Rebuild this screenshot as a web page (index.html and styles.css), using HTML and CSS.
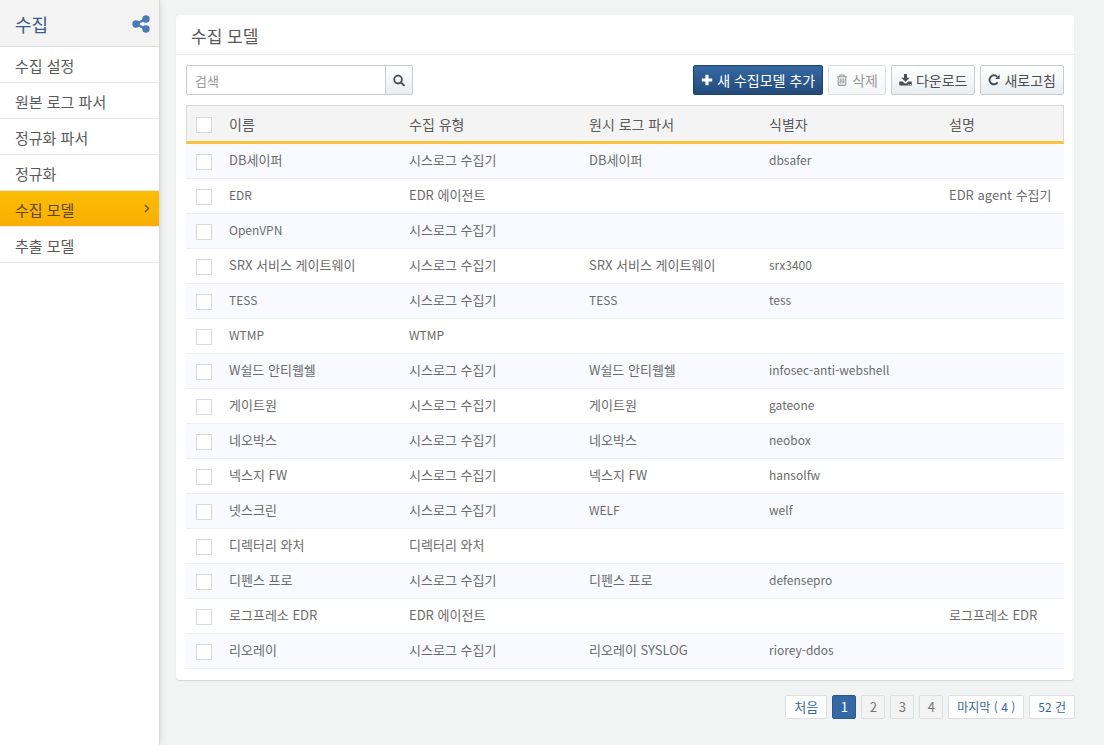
FILE: index.html
```html
<!DOCTYPE html>
<html lang="ko">
<head>
<meta charset="utf-8">
<meta name="viewport" content="width=device-width, initial-scale=1">
<title>수집 모델</title>
<link rel="stylesheet" href="styles.css">
</head>
<body>
<div class="app">
  <aside class="sidebar">
    <header class="sidebar-head">
      <h1 class="sidebar-title">수집</h1>
      <svg class="share-icon" width="18" height="18" viewBox="0 0 18 18" aria-hidden="true">
        <path d="M14 4 4 9l10 5" fill="none" stroke="currentColor" stroke-width="2.4"/>
        <circle cx="14" cy="4" r="3.7"/><circle cx="4" cy="9" r="3.7"/><circle cx="14" cy="14" r="3.7"/>
      </svg>
    </header>
    <nav class="menu">
      <a class="menu-item" href="#">수집 설정</a>
      <a class="menu-item" href="#">원본 로그 파서</a>
      <a class="menu-item" href="#">정규화 파서</a>
      <a class="menu-item" href="#">정규화</a>
      <a class="menu-item active" href="#" aria-current="page">수집 모델
        <svg class="chevron" width="6" height="9" viewBox="0 0 6 9" aria-hidden="true"><path d="M1 1l3.500 3.500L1 8" fill="none" stroke="currentColor" stroke-width="1.3"/></svg>
      </a>
      <a class="menu-item" href="#">추출 모델</a>
    </nav>
  </aside>
  <main class="content">
    <section class="panel">
      <h2 class="panel-title">수집 모델</h2>
      <div class="panel-body">
        <div class="toolbar">
          <form class="search">
            <input class="search-input" type="text" placeholder="검색" aria-label="검색">
            <button class="btn search-btn" type="button" aria-label="검색 실행">
              <svg width="13" height="13" viewBox="0 0 13 13" aria-hidden="true"><circle cx="5.5" cy="5.5" r="4.2" fill="none" stroke="currentColor" stroke-width="2"/><path d="M8.500 8.500l3.300 3.300" stroke="currentColor" stroke-width="2.2" stroke-linecap="round"/></svg>
            </button>
          </form>
          <div class="actions">
            <button class="btn primary" type="button">
              <svg width="12" height="12" viewBox="0 0 12 12" aria-hidden="true"><path d="M4.400.8h3.200v3.600h3.600v3.200H7.600v3.600H4.400V7.600H.8V4.400h3.600z" fill="currentColor"/></svg>새 수집모델 추가</button>
            <button class="btn" type="button" disabled>
              <svg width="12" height="12" viewBox="0 0 12 12" aria-hidden="true"><path d="M1 2.800h10M4 2.500V1h4v1.500M2.200 3v7.300q0 1.100 1.100 1.100h5.400q1.100 0 1.100-1.100V3M4.200 4.500v5M6 4.500v5M7.800 4.500v5" fill="none" stroke="currentColor" stroke-width="1.1"/></svg>삭제</button>
            <button class="btn" type="button">
              <svg width="13" height="12" viewBox="0 0 13 12" aria-hidden="true"><path d="M5 0h3v3.700h2.700L6.500 7.800 2.300 3.700H5zM1 7.500h2.700l1.600 1.600q1.200 1 2.400 0l1.600-1.600H12q.8 0 .8.8v2.500q0 .8-.8.8H1q-.8 0-.8-.8V8.300q0-.8.8-.8zm8.400 2.400v1h.9v-1zm1.700 0v1h.9v-1z" fill="currentColor" fill-rule="evenodd"/></svg>다운로드</button>
            <button class="btn" type="button">
              <svg width="12" height="12" viewBox="0 0 12 12" aria-hidden="true"><path d="M9.700 8.400A4.500 4.500 0 1 1 9.200 2.700" fill="none" stroke="currentColor" stroke-width="2"/><path d="M11.700.6v4.500H7.200z" fill="currentColor"/></svg>새로고침</button>
          </div>
        </div>
        <table class="grid">
          <colgroup><col class="col-check"><col class="col-field"><col class="col-field"><col class="col-field"><col class="col-field"><col></colgroup>
          <thead>
            <tr><th><input class="check" type="checkbox" aria-label="전체 선택"></th><th scope="col">이름</th><th scope="col">수집 유형</th><th scope="col">원시 로그 파서</th><th scope="col">식별자</th><th scope="col">설명</th></tr>
          </thead>
          <tbody>
            <tr><td><input class="check" type="checkbox" aria-label="DB세이퍼"></td><td>DB세이퍼</td><td>시스로그 수집기</td><td>DB세이퍼</td><td class="latin">dbsafer</td><td></td></tr>
            <tr><td><input class="check" type="checkbox" aria-label="EDR"></td><td class="latin">EDR</td><td>EDR 에이전트</td><td></td><td></td><td>EDR agent 수집기</td></tr>
            <tr><td><input class="check" type="checkbox" aria-label="OpenVPN"></td><td class="latin">OpenVPN</td><td>시스로그 수집기</td><td></td><td></td><td></td></tr>
            <tr><td><input class="check" type="checkbox" aria-label="SRX 서비스 게이트웨이"></td><td>SRX 서비스 게이트웨이</td><td>시스로그 수집기</td><td>SRX 서비스 게이트웨이</td><td class="latin">srx3400</td><td></td></tr>
            <tr><td><input class="check" type="checkbox" aria-label="TESS"></td><td class="latin">TESS</td><td>시스로그 수집기</td><td class="latin">TESS</td><td class="latin">tess</td><td></td></tr>
            <tr><td><input class="check" type="checkbox" aria-label="WTMP"></td><td class="latin">WTMP</td><td class="latin">WTMP</td><td></td><td></td><td></td></tr>
            <tr><td><input class="check" type="checkbox" aria-label="W쉴드 안티웹쉘"></td><td>W쉴드 안티웹쉘</td><td>시스로그 수집기</td><td>W쉴드 안티웹쉘</td><td class="latin">infosec-anti-webshell</td><td></td></tr>
            <tr><td><input class="check" type="checkbox" aria-label="게이트원"></td><td>게이트원</td><td>시스로그 수집기</td><td>게이트원</td><td class="latin">gateone</td><td></td></tr>
            <tr><td><input class="check" type="checkbox" aria-label="네오박스"></td><td>네오박스</td><td>시스로그 수집기</td><td>네오박스</td><td class="latin">neobox</td><td></td></tr>
            <tr><td><input class="check" type="checkbox" aria-label="넥스지 FW"></td><td>넥스지 FW</td><td>시스로그 수집기</td><td>넥스지 FW</td><td class="latin">hansolfw</td><td></td></tr>
            <tr><td><input class="check" type="checkbox" aria-label="넷스크린"></td><td>넷스크린</td><td>시스로그 수집기</td><td class="latin">WELF</td><td class="latin">welf</td><td></td></tr>
            <tr><td><input class="check" type="checkbox" aria-label="디렉터리 와처"></td><td>디렉터리 와처</td><td>디렉터리 와처</td><td></td><td></td><td></td></tr>
            <tr><td><input class="check" type="checkbox" aria-label="디펜스 프로"></td><td>디펜스 프로</td><td>시스로그 수집기</td><td>디펜스 프로</td><td class="latin">defensepro</td><td></td></tr>
            <tr><td><input class="check" type="checkbox" aria-label="로그프레소 EDR"></td><td>로그프레소 EDR</td><td>EDR 에이전트</td><td></td><td></td><td>로그프레소 EDR</td></tr>
            <tr><td><input class="check" type="checkbox" aria-label="리오레이"></td><td>리오레이</td><td>시스로그 수집기</td><td>리오레이 SYSLOG</td><td class="latin">riorey-ddos</td><td></td></tr>
          </tbody>
        </table>
      </div>
    </section>
    <nav class="pager" aria-label="페이지">
      <a class="page" href="#">처음</a>
      <a class="page number current" href="#" aria-current="page">1</a>
      <a class="page number" href="#">2</a>
      <a class="page number" href="#">3</a>
      <a class="page number" href="#">4</a>
      <a class="page summary" href="#">마지막 ( 4 )</a>
      <span class="page summary">52 건</span>
    </nav>
  </main>
</div>
</body>
</html>
```
FILE: styles.css
```css
* { box-sizing: border-box; }

body {
  margin: 0;
  background: #f2f4f4;
  color: #5a5a5a;
  font: 13px/20px "Noto Sans CJK KR", sans-serif;
}

.app { display: flex; min-height: 100vh; }

.sidebar {
  flex: none;
  width: 160px;
  background: #fff;
  border-right: 1px solid #d9dbdb;
  box-shadow: 0 0 6px rgba(0, 0, 0, .12);
}
.sidebar-head {
  display: flex;
  align-items: center;
  justify-content: space-between;
  height: 47px;
  padding: 2px 9px 0 15px;
  background: #f3f3f3;
  border-bottom: 1px solid #ddd;
}
.sidebar-title { margin: 0; color: #3b5a86; font-size: 18px; font-weight: 400; }
.share-icon { color: #4a7ab5; fill: currentColor; }

.menu-item {
  display: flex;
  align-items: center;
  justify-content: space-between;
  height: 36px;
  padding: 2px 9px 0 15px;
  border-bottom: 1px solid #e8e8e8;
  color: #5a5a5a;
  font-size: 15px;
  text-decoration: none;
}
.menu-item.active { background: linear-gradient(#fbbd04, #faae02); color: #5b470f; }
.chevron { margin-bottom: 2px; }

.content { flex: 1; min-width: 0; padding: 15px 30px 15px 16px; }

.panel {
  background: #fff;
  border-radius: 4px;
  box-shadow: 0 1px 1px #d4d6d6;
}
.panel-title {
  margin: 0;
  padding: 11px 15px 8px;
  border-bottom: 1px solid #ebebeb;
  font-size: 17px;
  font-weight: 400;
}
.panel-body { padding: 10px 10px 11px; }

.toolbar { display: flex; justify-content: space-between; margin-bottom: 10px; }
.search, .actions { display: flex; }
.actions { gap: 5px; }
.search-input {
  width: 200px;
  height: 30px;
  padding: 0 8px;
  border: 1px solid #c9cbcd;
  border-radius: 2px 0 0 2px;
  color: #555;
  font: inherit;
}
.search-input::placeholder { color: #999; }

.btn {
  display: flex;
  align-items: center;
  justify-content: center;
  gap: 4px;
  height: 30px;
  padding: 0 7px;
  border: 1px solid #c9cbcd;
  border-radius: 2px;
  background: linear-gradient(#fff, #e9edf1);
  color: #4f4f4f;
  font: 14px/20px "Noto Sans CJK KR", sans-serif;
}
.search-btn { width: 28px; margin-left: -1px; border-radius: 0 2px 2px 0; }
.btn.primary { border-color: #1f426d; background: linear-gradient(#3568a2, #234b7b); color: #fff; }
.btn:disabled { border-color: #dcdedf; background: linear-gradient(#fff, #f3f5f7); color: #999; }

.grid { width: 100%; table-layout: fixed; border-collapse: separate; border-spacing: 0; }
.col-check { width: 33px; }
.col-field { width: 180px; }
.grid th {
  height: 39px;
  padding: 0 10px;
  border-top: 1px solid #d9d9d9;
  border-bottom: 3px solid #fbc33b;
  background: #f4f4f4;
  font-size: 14px;
  font-weight: 400;
  text-align: left;
}
.grid th:first-child { border-left: 1px solid #d9d9d9; padding-left: 9px; }
.grid th:last-child { border-right: 1px solid #d9d9d9; }
.grid td { height: 35px; padding: 0 10px 2px; border-bottom: 1px solid #efeff1; color: #6c6c6c; }
.grid td.latin { font-size: 12px; }
.grid th:first-child, .grid td:first-child { padding-right: 0; padding-bottom: 0; }
.grid tbody tr:nth-child(odd) { background: #f9faff; }
.check {
  display: block;
  width: 16px;
  height: 16px;
  margin: 2px 0 0;
  appearance: none;
  border: 1px solid #d9d9d9;
  background: #fff;
}

.pager { display: flex; justify-content: flex-end; gap: 5px; margin: 15px -1px 0 0; }
.page {
  height: 24px;
  padding: 1px 8px;
  border: 1px solid #dcdedf;
  border-radius: 2px;
  background: #fff;
  color: #3568a2;
  text-decoration: none;
}
.page.summary { font-size: 12px; }
.page.number { width: 24px; padding: 1px 0; background: #f3f3f3; color: #777; text-align: center; }
.page.current { border-color: #2a5a92; background: #3568a5; color: #fff; }
```
